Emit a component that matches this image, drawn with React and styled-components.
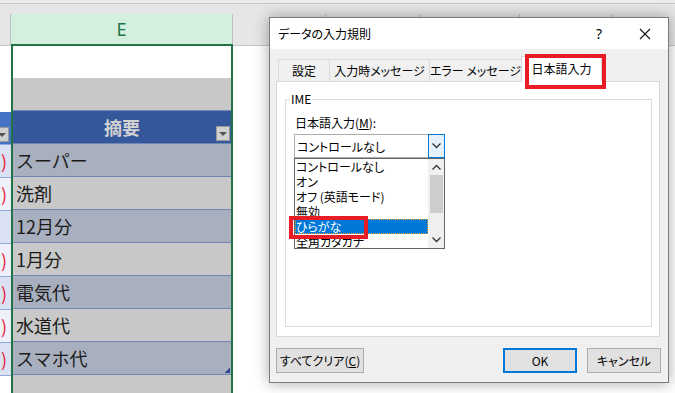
import React from 'react';
import styled, { createGlobalStyle } from 'styled-components';

const GlobalStyle = createGlobalStyle`
  html, body {
    margin: 0;
    padding: 0;
    background: #fff;
  }
  body {
    width: 675px;
    height: 393px;
    overflow: hidden;
    font-family: "Noto Sans CJK JP", "Noto Sans", sans-serif;
  }
`;

const Screen = styled.div`
  position: relative;
  width: 675px;
  height: 393px;
  overflow: hidden;
  background: #fff;
`;

/* ---------- spreadsheet ---------- */

const TopStrip = styled.div`
  height: 14px;
  background: linear-gradient(#ececec 0 3px, #c8c8c8 3px 4px, #e6e6e6 4px);
`;

const Sheet = styled.div`
  display: flex;
  height: 379px;
`;

const Column = styled.div`
  position: relative;
  display: flex;
  flex-direction: column;
  width: ${({ $w }) => ($w ? `${$w}px` : 'auto')};
  flex: ${({ $w }) => ($w ? 'none' : '1')};
  overflow: hidden;
`;

const ColHeader = styled.div`
  box-sizing: border-box;
  height: 32px;
  display: flex;
  align-items: center;
  justify-content: center;
  background: ${({ $active }) => ($active ? '#d3f0df' : '#e6e6e6')};
  border-right: 1px solid #c0c0c0;
  border-bottom: ${({ $active }) => ($active ? '2px solid #217346' : '1px solid #c6c6c6')};
  color: #217346;
  font-family: "Noto Sans", sans-serif;
  font-size: 18px;
`;

const HeaderRow = styled.div`
  display: flex;
`;

const HeaderCell = styled(ColHeader)`
  width: ${({ $w }) => $w}px;
  flex: none;
`;

const Body = styled.div`
  flex: 1;
  display: flex;
  flex-direction: column;
  background: ${({ $bg }) => $bg || '#fff'};
  border-left: ${({ $sel }) => ($sel ? '2px solid #217346' : 'none')};
  border-right: ${({ $sel }) => ($sel ? '2px solid #217346' : 'none')};
`;

const Cell = styled.div`
  position: relative;
  box-sizing: border-box;
  height: ${({ $h }) => $h || 33}px;
  flex: none;
  display: flex;
  align-items: center;
  justify-content: ${({ $right }) => ($right ? 'flex-end' : 'flex-start')};
  padding: ${({ $right }) => ($right ? '0 4px 0 0' : '0 0 0 3px')};
  background: ${({ $bg }) => $bg};
  border-bottom: ${({ $line }) => ($line ? `1px solid ${$line}` : 'none')};
  font-size: 18px;
  color: #1b1b1b;
  white-space: nowrap;
`;

const TableHead = styled(Cell)`
  justify-content: center;
  padding: 0;
  font-weight: bold;
  color: ${({ $fg }) => $fg};
`;

const Paren = styled.span`
  color: #e8203c;
  font-size: 18px;
`;

const FilterButton = styled.div`
  position: absolute;
  right: ${({ $r }) => $r}px;
  bottom: 2px;
  width: 14px;
  height: 15px;
  box-sizing: border-box;
  background: #d0d0d0;
  border: 1px solid #9a9a9a;
  display: flex;
  align-items: center;
  justify-content: center;

  &:after {
    content: '';
    border-left: 4px solid transparent;
    border-right: 4px solid transparent;
    border-top: 4px solid #555;
  }
`;

const SelHandle = styled.div`
  position: absolute;
  top: 30px;
  right: 0;
  width: 5px;
  height: 5px;
  background: #217346;
`;

const ResizeMark = styled.div`
  position: absolute;
  right: 1px;
  bottom: 1px;
  width: 5px;
  height: 5px;
  background: linear-gradient(135deg, transparent 50%, #2f4a8a 50%);
`;

/* ---------- dialog ---------- */

const Dialog = styled.div`
  position: absolute;
  left: 269px;
  top: 17px;
  width: 400px;
  height: 366px;
  box-sizing: border-box;
  border: 1px solid #7c7c7c;
  background: #f0f0f0;
  box-shadow: 0 0 14px rgba(0, 0, 0, 0.35);
  display: flex;
  flex-direction: column;
  font-size: 12px;
  font-feature-settings: "palt" 1;
  color: #000;
  white-space: nowrap;
`;

const TitleBar = styled.div`
  height: 31px;
  flex: none;
  display: flex;
  align-items: center;
  background: #fff;
  padding-left: 8px;
`;

const Title = styled.div`
  flex: 1;
`;

const TitleButton = styled.div`
  width: 46px;
  height: 31px;
  display: flex;
  align-items: center;
  justify-content: center;
  font-family: "Noto Sans", sans-serif;
  font-size: 14px;
`;

const DialogBody = styled.div`
  flex: 1;
  display: flex;
  flex-direction: column;
  padding: 7px 8px 9px 6px;
`;

const TabRow = styled.div`
  height: 25px;
  display: flex;
  align-items: flex-end;
  padding-left: 2px;
  position: relative;
  z-index: 1;
`;

const Tab = styled.div`
  box-sizing: border-box;
  width: ${({ $w }) => $w}px;
  height: ${({ $active }) => ($active ? 26 : 22)}px;
  margin-bottom: ${({ $active }) => ($active ? -1 : 0)}px;
  margin-left: ${({ $first }) => ($first ? 0 : -1)}px;
  display: flex;
  align-items: center;
  justify-content: center;
  background: ${({ $active }) => ($active ? '#fff' : '#f0f0f0')};
  border: 1px solid #d9d9d9;
  border-bottom: none;
  padding-bottom: ${({ $active }) => ($active ? 2 : 0)}px;
`;

const Panel = styled.div`
  height: 256px;
  box-sizing: border-box;
  background: #fff;
  border: 1px solid #d9d9d9;
  display: flex;
  flex-direction: column;
  padding: 17px 7px 9px 8px;
`;

const GroupBox = styled.div`
  position: relative;
  flex: 1;
  border: 1px solid #dcdcdc;
  padding: 15px 8px 0 8px;
`;

const Legend = styled.span`
  position: absolute;
  top: -9px;
  left: 4px;
  padding: 0 1px;
  background: #fff;
  line-height: 16px;
`;

const FieldLabel = styled.div`
  line-height: 16px;
  padding-left: 1px;
`;

const Combo = styled.div`
  position: relative;
  margin-top: 3px;
  width: 151px;
  height: 24px;
  box-sizing: border-box;
  border: 1px solid #adadad;
  border-right: none;
  display: flex;
  align-items: center;
`;

const ComboText = styled.div`
  flex: 1;
  padding-left: 2px;
`;

const ComboButton = styled.div`
  width: 17px;
  height: 24px;
  margin-top: -1px;
  box-sizing: border-box;
  border: 1px solid #0078d7;
  background: #e5f1fb;
  display: flex;
  align-items: center;
  justify-content: center;
`;

const DropList = styled.div`
  position: absolute;
  left: -1px;
  top: 23px;
  width: 151px;
  height: 91px;
  box-sizing: border-box;
  border: 1px solid #646464;
  background: #fff;
  display: flex;
  z-index: 2;
`;

const Items = styled.div`
  flex: 1;
  overflow: hidden;
`;

const Item = styled.div`
  height: 15px;
  line-height: 15px;
  padding-left: 1px;
  box-sizing: border-box;
  background: ${({ $sel }) => ($sel ? '#0078d7' : 'transparent')};
  color: ${({ $sel }) => ($sel ? '#fff' : '#000')};
  outline: ${({ $sel }) => ($sel ? '1px dotted #f0a030' : 'none')};
  outline-offset: -1px;
`;

const ScrollBar = styled.div`
  width: 16px;
  background: #f0f0f0;
  display: flex;
  flex-direction: column;
  align-items: center;
`;

const ScrollArrow = styled.div`
  height: 16px;
  display: flex;
  align-items: center;
  justify-content: center;
`;

const Thumb = styled.div`
  width: 13px;
  height: 38px;
  background: #cdcdcd;
`;

const ScrollGap = styled.div`
  flex: 1;
`;

const Footer = styled.div`
  display: flex;
  margin-top: 11px;
  margin-right: -1px;
  gap: 10px;
`;

const Button = styled.div`
  box-sizing: border-box;
  width: ${({ $w }) => $w}px;
  height: 25px;
  display: flex;
  align-items: center;
  justify-content: center;
  background: #e1e1e1;
  border: ${({ $default }) => ($default ? '2px solid #0078d7' : '1px solid #adadad')};
  margin-left: ${({ $push }) => ($push ? 'auto' : '0')};
`;

const RedBox = styled.div`
  position: absolute;
  left: ${({ $x }) => $x}px;
  top: ${({ $y }) => $y}px;
  width: ${({ $w }) => $w}px;
  height: ${({ $h }) => $h}px;
  box-sizing: border-box;
  border: 4px solid #e81c24;
  z-index: 5;
`;

const Chevron = ({ up }) => (
  <svg width="9" height="6" viewBox="0 0 9 6">
    <path
      d={up ? 'M0.5 5.5 L4.5 1.5 L8.5 5.5' : 'M0.5 0.5 L4.5 4.5 L8.5 0.5'}
      fill="none"
      stroke="#333"
      strokeWidth="1.3"
    />
  </svg>
);

const rows = [
  { text: 'スーパー', paren: true },
  { text: '洗剤', paren: true },
  { text: '12月分', paren: false },
  { text: '1月分', paren: true },
  { text: '電気代', paren: true },
  { text: '水道代', paren: true },
  { text: 'スマホ代', paren: true },
];

const imeItems = ['コントロールなし', 'オン', 'オフ (英語モード)', '無効', 'ひらがな', '全角カタカナ'];

const App = () => (
  <Screen>
    <GlobalStyle />
    <TopStrip />
    <Sheet>
      <Column $w={11}>
        <ColHeader />
        <Body>
          <Cell $h={66} $bg="#fff" />
          <TableHead $bg="#4472c4" $line="#8ea9db">
            <FilterButton $r={2} />
          </TableHead>
          {rows.map((r, i) => (
            <Cell key={i} $right $bg={i % 2 === 0 ? '#d9e1f2' : '#eef1f9'} $line="#8ea9db">
              {r.paren && <Paren>)</Paren>}
            </Cell>
          ))}
        </Body>
      </Column>

      <Column $w={222}>
        <ColHeader $active>E</ColHeader>
        <SelHandle />
        <Body $sel $bg="#c8c8c8">
          <Cell $h={32} $bg="#fff" />
          <Cell $bg="#c8c8c8" $line="#6f86b3" />
          <TableHead $bg="#34589b" $fg="#d2d2d2" $line="#6f86b3">
            摘要
            <FilterButton $r={1} />
          </TableHead>
          {rows.map((r, i) => (
            <Cell key={i} $bg={i % 2 === 0 ? '#a8afbe' : '#c8c8c8'} $line="#6f86b3">
              {r.text}
              {i === rows.length - 1 && <ResizeMark />}
            </Cell>
          ))}
        </Body>
      </Column>

      <Column>
        <HeaderRow>
          <HeaderCell $w={93} />
          <HeaderCell $w={95} />
          <HeaderCell $w={99} />
          <HeaderCell $w={93} />
          <HeaderCell $w={80} />
        </HeaderRow>
        <Body />
      </Column>
    </Sheet>

    <Dialog>
      <RedBox $x={255} $y={36} $w={81} $h={35} />
      <RedBox $x={19} $y={198} $w={79} $h={23} />
      <TitleBar>
        <Title>データの入力規則</Title>
        <TitleButton>?</TitleButton>
        <TitleButton>
          <svg width="12" height="12" viewBox="0 0 12 12">
            <path d="M1 1 L11 11 M11 1 L1 11" stroke="#111" strokeWidth="1.1" />
          </svg>
        </TitleButton>
      </TitleBar>
      <DialogBody>
        <TabRow>
          <Tab $first $w={52}>設定</Tab>
          <Tab $w={101}>入力時メッセージ</Tab>
          <Tab $w={93}>エラー メッセージ</Tab>
          <Tab $active $w={81}>日本語入力</Tab>
        </TabRow>
        <Panel>
          <GroupBox>
            <Legend>IME</Legend>
            <FieldLabel>
              日本語入力(<u>M</u>):
            </FieldLabel>
            <Combo>
              <ComboText>コントロールなし</ComboText>
              <ComboButton>
                <Chevron />
              </ComboButton>
              <DropList>
                <Items>
                  {imeItems.map((t, i) => (
                    <Item key={t} $sel={i === 4}>
                      {t}
                    </Item>
                  ))}
                </Items>
                <ScrollBar>
                  <ScrollArrow>
                    <Chevron up />
                  </ScrollArrow>
                  <Thumb />
                  <ScrollGap />
                  <ScrollArrow>
                    <Chevron />
                  </ScrollArrow>
                </ScrollBar>
              </DropList>
            </Combo>
          </GroupBox>
        </Panel>
        <Footer>
          <Button $w={88}>
            すべてクリア(<u>C</u>)
          </Button>
          <Button $w={74} $push $default>
            OK
          </Button>
          <Button $w={74}>キャンセル</Button>
        </Footer>
      </DialogBody>
    </Dialog>
  </Screen>
);

export default App;
